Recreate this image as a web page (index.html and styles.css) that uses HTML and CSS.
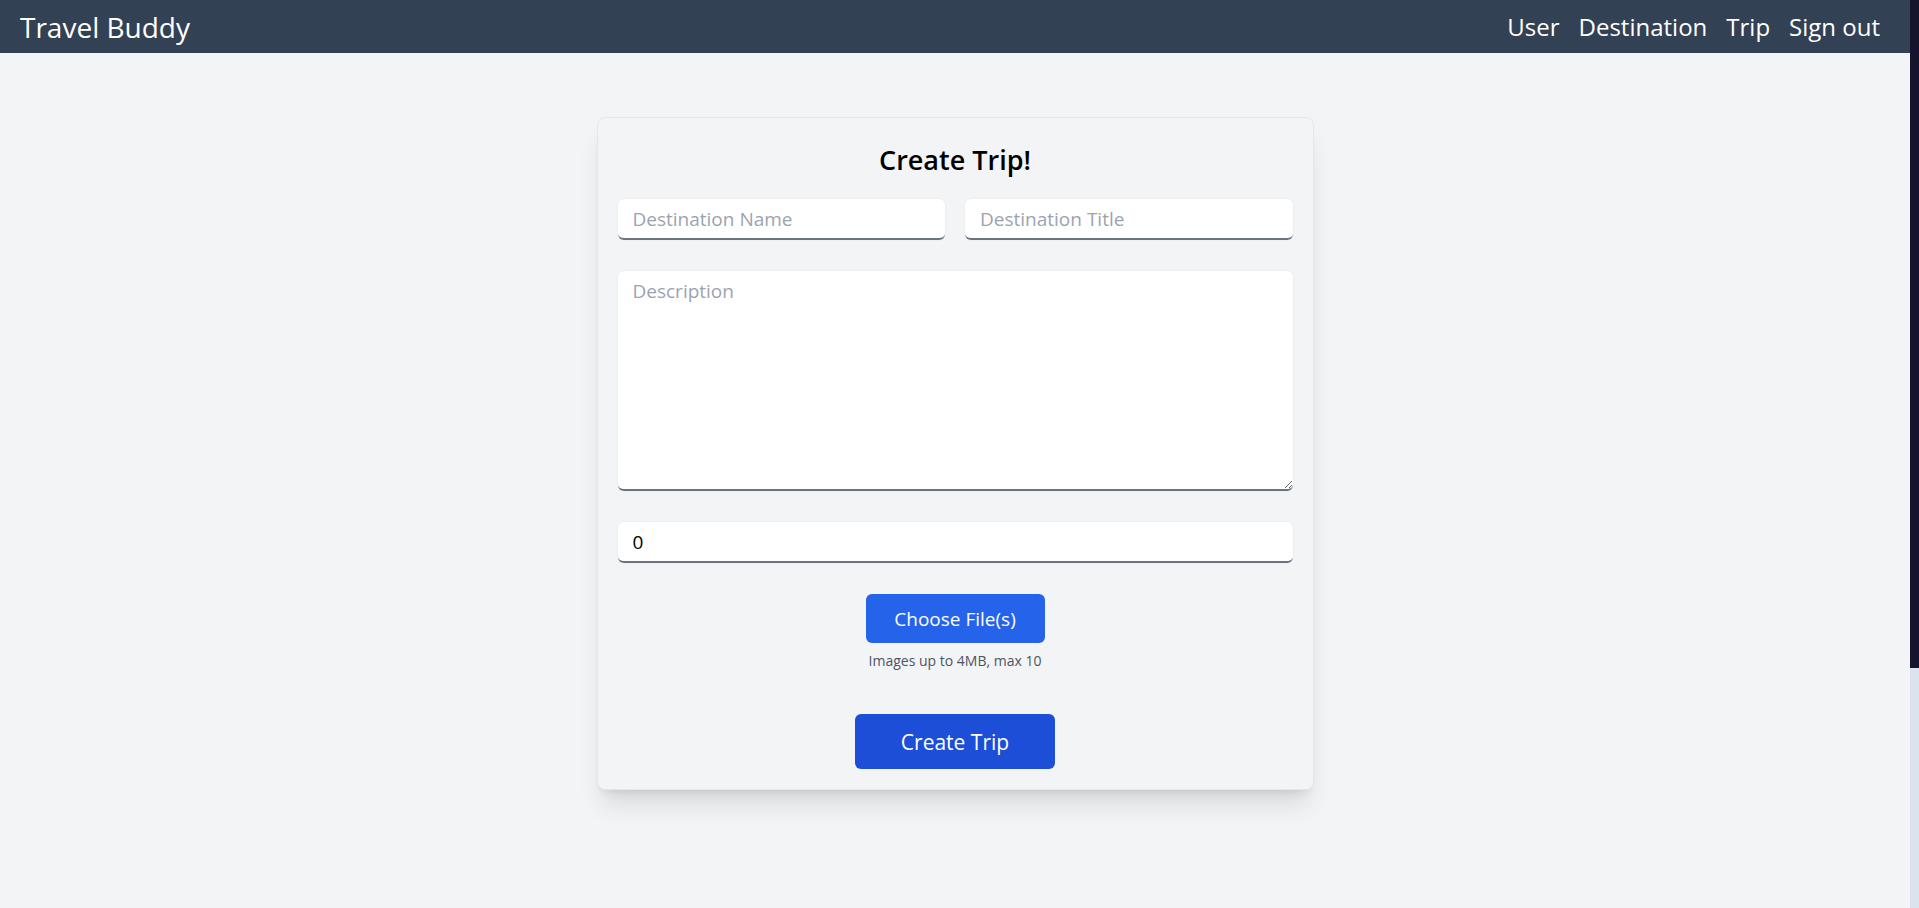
FILE: index.html
```html
<!DOCTYPE html>
<html lang="en">
<head>
<meta charset="utf-8">
<title>Travel Buddy</title>
<link rel="stylesheet" href="styles.css">
</head>
<body>
<div class="app">
  <header class="topbar">
    <a class="brand" href="#">Travel Buddy</a>
    <nav class="nav">
      <a href="#">User</a>
      <a href="#">Destination</a>
      <a href="#">Trip</a>
      <a href="#">Sign out</a>
    </nav>
  </header>
  <main class="page">
    <form class="card">
      <h1 class="card-title">Create Trip!</h1>
      <div class="row">
        <input class="field" type="text" placeholder="Destination Name">
        <input class="field" type="text" placeholder="Destination Title">
      </div>
      <textarea class="field area" placeholder="Description"></textarea>
      <input class="field" type="number" value="0">
      <div class="upload">
        <button type="button" class="btn-choose">Choose File(s)</button>
        <p class="hint">Images up to 4MB, max 10</p>
      </div>
      <div class="submit-wrap">
        <button type="submit" class="btn-create">Create Trip</button>
      </div>
    </form>
  </main>
</div>
<div class="scrollbar" aria-hidden="true">
  <div class="scrollbar-thumb"></div>
</div>
</body>
</html>
```

FILE: styles.css
```css
body {
  margin: 0;
  min-height: 100vh;
  background: #f3f4f6;
  font-family: "Open Sans", "Noto Sans", sans-serif;
  color: #000;
  display: flex;
  overflow: hidden;
}
.app {
  flex: 1;
  min-width: 0;
}
.scrollbar {
  width: 9px;
  flex-shrink: 0;
  background: #dbe3ec;
}
.scrollbar-thumb {
  height: 668px;
  background: #14142e;
}
.topbar {
  height: 53px;
  background: #334155;
  display: flex;
  align-items: center;
  justify-content: space-between;
  padding: 0 30px 0 20px;
}
.brand {
  color: #fff;
  text-decoration: none;
  font-size: 28px;
}
.nav {
  display: flex;
  gap: 19px;
}
.nav a {
  color: #fff;
  text-decoration: none;
  font-size: 24px;
}
.page {
  display: flex;
  justify-content: center;
  padding-top: 64px;
}
.card {
  width: 717px;
  box-sizing: border-box;
  height: 673px;
  border: 1px solid #e5e7eb;
  border-radius: 8px;
  padding: 20px;
  background: #f3f4f6;
  box-shadow: 0 20px 25px -5px rgba(0,0,0,0.1), 0 8px 10px -6px rgba(0,0,0,0.1);
  display: flex;
  flex-direction: column;
}
.card-title {
  margin: 2px 0 19px;
  text-align: center;
  font-size: 27px;
  line-height: 40px;
  font-weight: 600;
}
.row {
  display: grid;
  grid-template-columns: 1fr 1fr;
  gap: 20px;
}
.field {
  display: block;
  box-sizing: border-box;
  width: 100%;
  height: 41px;
  margin: 0;
  padding: 1px 15px 0;
  border: none;
  border-bottom: 2px solid #6b7280;
  border-radius: 6px;
  background: #fff;
  font-family: inherit;
  font-size: 19px;
  color: #000;
  box-shadow: 0 0 2px rgba(0,0,0,0.08);
  outline: none;
}
.field::placeholder {
  color: #9ca3af;
}
.area {
  margin-top: 31px;
  height: 221px;
  padding: 7px 15px;
  resize: vertical;
}
.area + .field {
  margin-top: 31px;
}
.upload {
  margin-top: 31px;
  display: flex;
  flex-direction: column;
  align-items: center;
}
.btn-choose {
  width: 179px;
  height: 49px;
  border: none;
  border-radius: 6px;
  background: #2563eb;
  color: #fff;
  font-family: inherit;
  font-size: 19px;
}
.hint {
  margin: 8px 0 0;
  font-size: 14px;
  line-height: 20px;
  color: #4b5563;
}
.submit-wrap {
  margin-top: 43px;
  display: flex;
  justify-content: center;
}
.btn-create {
  width: 200px;
  height: 55px;
  border: none;
  border-radius: 6px;
  background: #1d4ed8;
  color: #fff;
  font-family: inherit;
  font-size: 21px;
}
```
